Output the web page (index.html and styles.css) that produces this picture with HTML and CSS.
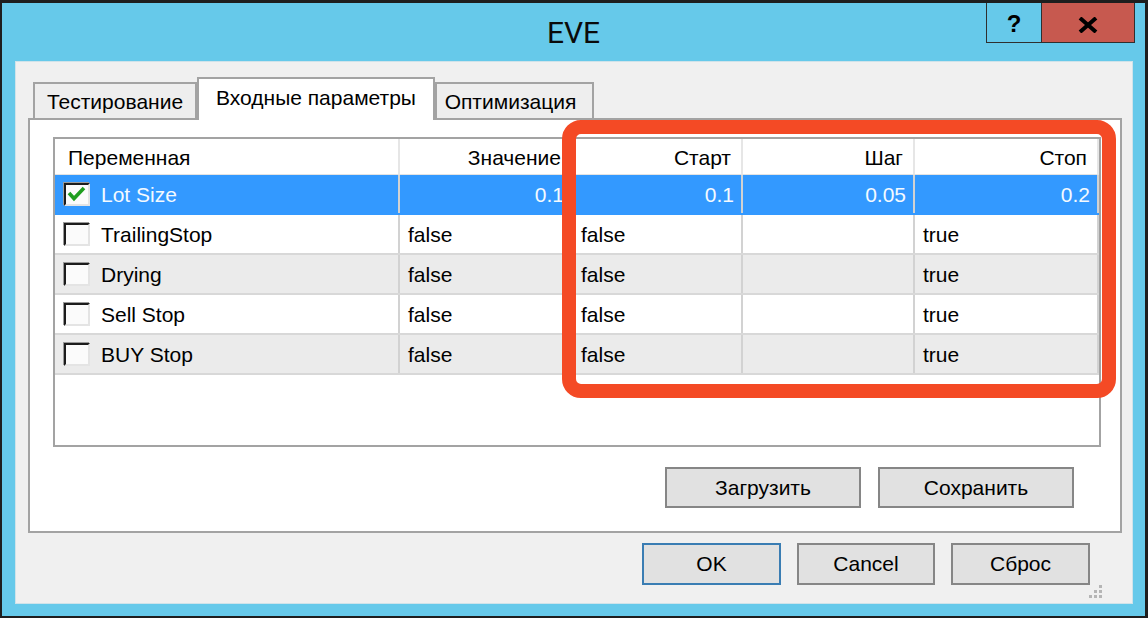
FILE: index.html
```html
<!DOCTYPE html>
<html lang="ru">
<head>
<meta charset="utf-8">
<title>EVE</title>
<link rel="stylesheet" href="styles.css">
</head>
<body>
<div class="window">
  <div class="titlebar">
    <div></div>
    <div class="title">EVE</div>
    <div class="caption">
      <div class="cap-btn cap-help">?</div>
      <div class="cap-btn cap-close">
        <svg width="20" height="16" viewBox="0 0 20 16"><path d="M2 1 L18 15 M18 1 L2 15" stroke="#000" stroke-width="4" fill="none"/></svg>
      </div>
    </div>
  </div>
  <div class="client">
    <div class="tabs">
      <div class="tab tab-test">Тестирование</div>
      <div class="tab tab-input">Входные параметры</div>
      <div class="tab tab-opt">Оптимизация</div>
    </div>
    <div class="panel">
      <div class="list">
        <div class="grid head">
          <div class="hc hc-first">Переменная</div>
          <div class="hc">Значение</div>
          <div class="hc">Старт</div>
          <div class="hc">Шаг</div>
          <div class="hc">Стоп</div>
        </div>
        <div class="grid row sel">
          <div class="c c-first"><span class="cb"><svg width="22" height="19" viewBox="0 0 22 19"><path d="M3 8 L8 13.5 L18 3" stroke="#1f9e1f" stroke-width="3.6" fill="none"/></svg></span><span>Lot Size</span></div>
          <div class="c num">0.1</div>
          <div class="c num">0.1</div>
          <div class="c num">0.05</div>
          <div class="c num">0.2</div>
        </div>
        <div class="grid row">
          <div class="c c-first"><span class="cb"></span><span>TrailingStop</span></div>
          <div class="c">false</div>
          <div class="c">false</div>
          <div class="c"></div>
          <div class="c">true</div>
        </div>
        <div class="grid row alt">
          <div class="c c-first"><span class="cb"></span><span>Drying</span></div>
          <div class="c">false</div>
          <div class="c">false</div>
          <div class="c"></div>
          <div class="c">true</div>
        </div>
        <div class="grid row">
          <div class="c c-first"><span class="cb"></span><span>Sell Stop</span></div>
          <div class="c">false</div>
          <div class="c">false</div>
          <div class="c"></div>
          <div class="c">true</div>
        </div>
        <div class="grid row alt">
          <div class="c c-first"><span class="cb"></span><span>BUY Stop</span></div>
          <div class="c">false</div>
          <div class="c">false</div>
          <div class="c"></div>
          <div class="c">true</div>
        </div>
      </div>
      <div class="panel-btns">
        <button class="btn btn-wide">Загрузить</button>
        <button class="btn btn-wide">Сохранить</button>
      </div>
    </div>
    <div class="dialog-btns">
      <button class="btn btn-dlg btn-ok">OK</button>
      <button class="btn btn-dlg btn-cancel">Cancel</button>
      <button class="btn btn-dlg">Сброс</button>
    </div>
    <svg class="grip" width="13" height="13" viewBox="0 0 13 13">
      <rect x="10" y="0" width="3" height="3" fill="#b5b5b5"/>
      <rect x="5" y="5" width="3" height="3" fill="#b5b5b5"/>
      <rect x="10" y="5" width="3" height="3" fill="#b5b5b5"/>
      <rect x="0" y="10" width="3" height="3" fill="#b5b5b5"/>
      <rect x="5" y="10" width="3" height="3" fill="#b5b5b5"/>
      <rect x="10" y="10" width="3" height="3" fill="#b5b5b5"/>
    </svg>
  </div>
  <div class="highlight"></div>
</div>
</body>
</html>
```

FILE: styles.css
```css
html, body {
  margin: 0;
  padding: 0;
  background: #66c9ea;
}

.window {
  position: relative;
  width: 1148px;
  height: 618px;
  box-sizing: border-box;
  background: #66c9ea;
  border-style: solid;
  border-color: #1e1e1e;
  border-width: 3px 3px 2px 2px;
  display: flex;
  flex-direction: column;
  font-family: "Liberation Sans", Arial, sans-serif;
  font-size: 21px;
  color: #000;
  overflow: hidden;
}

/* ---------- title bar ---------- */
.titlebar {
  height: 59px;
  flex: none;
  display: grid;
  grid-template-columns: 1fr auto 1fr;
  align-items: start;
}

.title {
  font-family: Roboto, "Open Sans", sans-serif;
  font-size: 30px;
  line-height: 59px;
  color: #0a0a0a;
}

.caption {
  justify-self: end;
  display: flex;
  height: 40px;
  box-sizing: border-box;
  margin-right: 10px;
  border: 1px solid #2f2f2f;
  border-top: none;
}

.cap-btn {
  display: flex;
  align-items: center;
  justify-content: center;
}

.cap-help {
  width: 55px;
  border-right: 1px solid #2f2f2f;
  font-weight: bold;
  font-size: 24px;
  padding-top: 2px;
  box-sizing: border-box;
}

.cap-close {
  width: 92px;
  background: #c7594f;
  padding-top: 5px;
  box-sizing: border-box;
}

/* ---------- client area ---------- */
.client {
  flex: 1;
  margin: 0 13px 13px 14px;
  background: #f0f0f0;
  position: relative;
  display: flex;
  flex-direction: column;
  padding-top: 15px;
  box-shadow: 0 0 0 1px #cfe3ea;
}

.tabs {
  display: flex;
  align-items: flex-end;
  height: 41px;
  margin-left: 17px;
}

.tab {
  height: 36px;
  box-sizing: border-box;
  border: 2px solid #a3a3a3;
  border-bottom: none;
  background: #eeeeee;
  display: flex;
  align-items: center;
  justify-content: center;
  white-space: nowrap;
  padding-top: 2px;
}

.tab-test {
  width: 164px;
}

.tab-input {
  width: 238px;
  height: 43px;
  background: #fff;
  margin-bottom: -2px;
  position: relative;
  z-index: 1;
  padding-top: 0;
  padding-bottom: 3px;
}

.tab-opt {
  width: 159px;
  padding-right: 8px;
}

.panel {
  margin: 0 10px 0 12px;
  height: 415px;
  box-sizing: border-box;
  border: 2px solid #a3a3a3;
  background: #fff;
  padding: 17px 19px 0 23px;
  display: flex;
  flex-direction: column;
}

/* ---------- list view ---------- */
.list {
  height: 310px;
  box-sizing: border-box;
  border: 2px solid #a3a3a3;
  background: #fff;
}

.grid {
  display: grid;
  grid-template-columns: 345px 173px 170px 172px 184px;
}

.head {
  height: 36px;
  box-sizing: border-box;
  border-bottom: 1px solid #e3e3e3;
}

.hc {
  display: flex;
  align-items: center;
  justify-content: flex-end;
  padding: 3px 10px 0 10px;
  border-right: 2px solid #e6e6e6;
  white-space: nowrap;
}

.hc-first {
  justify-content: flex-start;
  padding-left: 13px;
}

.row {
  height: 40px;
  box-sizing: border-box;
  border-bottom: 2px solid #d8d8d8;
}

.row.alt {
  background: #ebebeb;
}

.row.sel {
  background: #3399ff;
  color: #f4faff;
  border-bottom-color: #3399ff;
}

.c {
  display: flex;
  align-items: center;
  padding: 2px 7px 0 8px;
  border-right: 2px solid #d2d2d2;
  white-space: nowrap;
}

.c.num {
  justify-content: flex-end;
}

.c-first {
  padding-left: 9px;
  gap: 11px;
}

.cb {
  width: 26px;
  height: 23px;
  box-sizing: border-box;
  border-style: solid;
  border-width: 2px;
  border-color: #1c1c1c #e4e4e4 #e4e4e4 #1c1c1c;
  box-shadow: -1px -1px 0 #9a9a9a;
  background: #fbfbfb;
  display: flex;
  flex: none;
  margin-top: -2px;
}

/* ---------- buttons ---------- */
.panel-btns {
  display: flex;
  justify-content: flex-end;
  gap: 17px;
  margin-top: 20px;
  margin-right: 27px;
}

.btn {
  height: 41px;
  box-sizing: border-box;
  border: 2px solid #868686;
  background: #e1e1e1;
  font-family: "Liberation Sans", Arial, sans-serif;
  font-size: 21px;
  color: #000;
  padding: 0;
  display: flex;
  align-items: center;
  justify-content: center;
}

.btn-wide {
  width: 196px;
}

.dialog-btns {
  display: flex;
  justify-content: flex-end;
  gap: 16px;
  margin: 10px 42px 0 0;
}

.btn-dlg {
  width: 139px;
  height: 42px;
}

.btn-cancel {
  width: 138px;
}

.btn-ok {
  border-color: #3a7db3;
}

.grip {
  position: absolute;
  right: 30px;
  bottom: 5px;
}

/* ---------- annotation ---------- */
.highlight {
  position: absolute;
  left: 560px;
  top: 117px;
  width: 554px;
  height: 278px;
  box-sizing: border-box;
  border: 14px solid #f44a25;
  border-radius: 19px;
  z-index: 5;
}
```
